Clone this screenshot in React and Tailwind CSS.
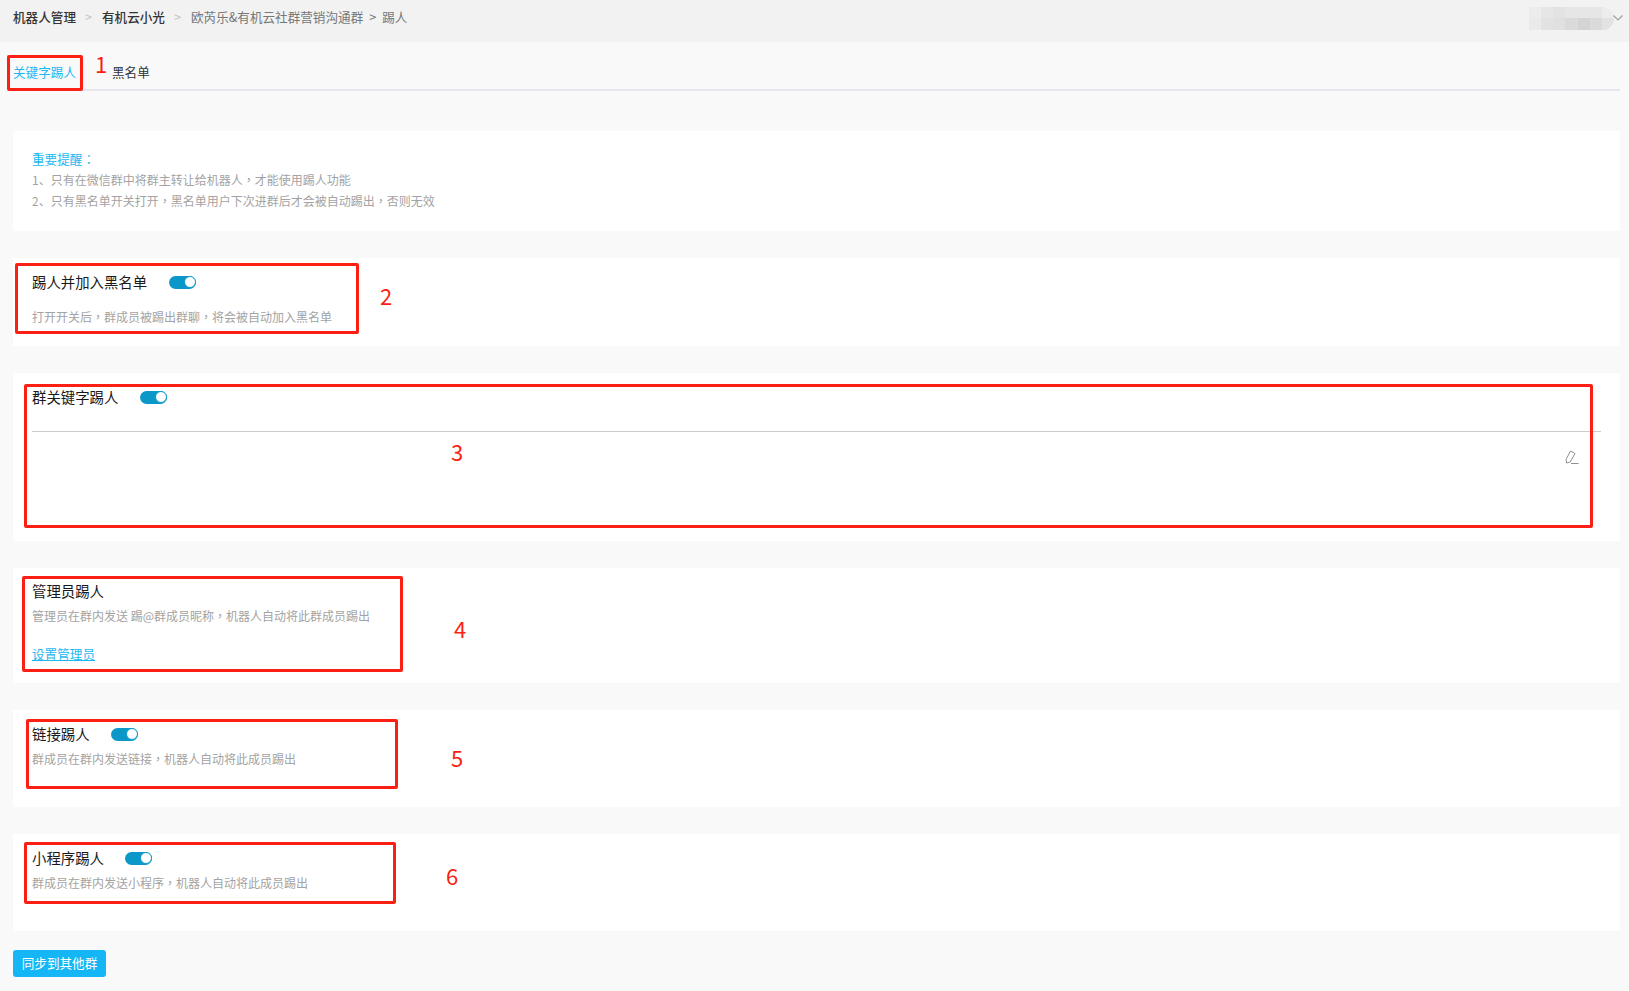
import React from "react";

const Toggle = () => (
  <div className="flex h-[13px] w-[27px] items-center justify-end rounded-full bg-[#0b98c8]">
    <div className="h-[12px] w-[12px] rounded-full border border-[#0b98c8] bg-white" />
  </div>
);

// full-width punctuation sits in the middle of its cell in the reference
const Comma = () => <span className="font-['Noto_Sans_CJK_TC']">，</span>;

const Desc = ({ children, className = "" }) => (
  <p className={`text-[12px] leading-[20px] text-[#a3a3a3] ${className}`}>{children}</p>
);

const Label = ({ children }) => (
  <span className="text-[14.4px] leading-[20px] text-[#1a1a1a]">{children}</span>
);

const Card = ({ className, children }) => (
  <section className={`bg-white px-[19px] ${className}`}>{children}</section>
);

// Red numbered boxes drawn over the screenshot
const Marks = () => (
  <>
    <div className="absolute left-[7px] top-[55px] h-[36px] w-[76px] rounded-[2px] border-[3px] border-[#fb1f14]" />
    <div className="absolute left-[15px] top-[263px] h-[71px] w-[344px] rounded-[2px] border-[3px] border-[#fb1f14]" />
    <div className="absolute left-[24px] top-[384px] h-[144px] w-[1569px] rounded-[2px] border-[3px] border-[#fb1f14]" />
    <div className="absolute left-[22px] top-[576px] h-[96px] w-[381px] rounded-[2px] border-[3px] border-[#fb1f14]" />
    <div className="absolute left-[26px] top-[719px] h-[70px] w-[372px] rounded-[2px] border-[3px] border-[#fb1f14]" />
    <div className="absolute left-[24px] top-[842px] h-[62px] w-[372px] rounded-[2px] border-[3px] border-[#fb1f14]" />
    <span className="absolute left-[95px] top-[48px] text-[22px] leading-[30px] text-[#fb1f14]">1</span>
    <span className="absolute left-[380px] top-[280px] text-[22px] leading-[30px] text-[#fb1f14]">2</span>
    <span className="absolute left-[451px] top-[436px] text-[22px] leading-[30px] text-[#fb1f14]">3</span>
    <span className="absolute left-[454px] top-[613px] text-[22px] leading-[30px] text-[#fb1f14]">4</span>
    <span className="absolute left-[451px] top-[742px] text-[22px] leading-[30px] text-[#fb1f14]">5</span>
    <span className="absolute left-[446px] top-[860px] text-[22px] leading-[30px] text-[#fb1f14]">6</span>
  </>
);

// pixelated user name, blurred out in the reference
const BlurredName = () => (
  <div className="grid h-[23px] w-[85px] grid-cols-7 grid-rows-2 overflow-hidden rounded-r-full">
    <div className="bg-[#ececec]" />
    <div className="bg-[#e6e6e6]" />
    <div className="bg-[#e2e2e2]" />
    <div className="bg-[#e6e6e6]" />
    <div className="bg-[#e6e6e6]" />
    <div className="bg-[#e6e6e6]" />
    <div className="bg-[#ececec]" />
    <div className="bg-[#eaeaea]" />
    <div className="bg-[#e2e2e2]" />
    <div className="bg-[#e0e0e0]" />
    <div className="bg-[#dadada]" />
    <div className="bg-[#d4d4d4]" />
    <div className="bg-[#dadada]" />
    <div className="bg-[#e2e2e2]" />
  </div>
);

export default function App() {
  return (
    <div
      className="relative h-[991px] overflow-hidden bg-[#f9f9f9]"
      style={{ fontFamily: '"Noto Sans CJK SC", "Noto Sans", sans-serif' }}
    >
      <header className="flex h-[42px] items-center justify-between bg-[#f2f2f2] pl-[13px] pr-[6px] text-[12.6px]">
        <nav className="flex items-center pb-[8px]">
          <span className="font-medium text-[#333]">机器人管理</span>
          <span className="ml-[9px] text-[#c4c4c4]">&gt;</span>
          <span className="ml-[10px] font-medium text-[#333]">有机云小光</span>
          <span className="ml-[9px] text-[#c4c4c4]">&gt;</span>
          <span className="ml-[10px] text-[#777]">欧芮乐&amp;有机云社群营销沟通群</span>
          <span className="ml-[6px] text-[#777]">&gt;</span>
          <span className="ml-[6px] text-[#777]">踢人</span>
        </nav>
        <div className="flex items-center pb-[6px]">
          <BlurredName />
          <svg width="10" height="6" viewBox="0 0 10 6" className="-ml-[1px]" fill="none" stroke="#a0a0a0" strokeWidth="1.2">
            <path d="M0.5 0.5 L5 5 L9.5 0.5" />
          </svg>
        </div>
      </header>

      <main className="pl-[13px] pr-[9px]">
        <div className="flex h-[49px] items-end gap-[36px] border-b-2 border-[#e6e6ee] pb-[7px] text-[12.6px] leading-[20px]">
          <span className="text-[#1bb8f2]">关键字踢人</span>
          <span className="text-[#333]">黑名单</span>
        </div>

        <Card className="mt-[40px] h-[100px] pt-[17px] text-[12px] leading-[21px] text-[#a3a3a3]">
          <p className="text-[12.6px] text-[#1bb8f2]">
            重要提醒<span className="font-['Noto_Sans_CJK_TC']">：</span>
          </p>
          <p>1、只有在微信群中将群主转让给机器人<Comma />才能使用踢人功能</p>
          <p>2、只有黑名单开关打开<Comma />黑名单用户下次进群后才会被自动踢出<Comma />否则无效</p>
        </Card>

        <Card className="mt-[27px] h-[88px] pt-[14px]">
          <div className="flex items-center gap-[22px]">
            <Label>踢人并加入黑名单</Label>
            <Toggle />
          </div>
          <Desc className="mt-[15px]">打开开关后<Comma />群成员被踢出群聊<Comma />将会被自动加入黑名单</Desc>
        </Card>

        <Card className="mt-[27px] h-[168px] pt-[14px]">
          <div className="flex items-center gap-[22px]">
            <Label>群关键字踢人</Label>
            <Toggle />
          </div>
          <div className="mt-[24px] flex justify-end border-t border-[#cccccc] pr-[22px] pt-[18px]">
            <svg width="14" height="15" viewBox="0 0 14 15" fill="none" stroke="#8f8f8f" strokeWidth="1">
              <path d="M1.5 13 L1 9.5 L5.5 1 L10 3.5 L5.2 12 Z" />
              <path d="M6 13.5 H13.5" />
            </svg>
          </div>
        </Card>

        <Card className="mt-[27px] h-[115px] pt-[10px]">
          <Label>管理员踢人</Label>
          <Desc className="mt-[4px]">管理员在群内发送 踢@群成员昵称<Comma />机器人自动将此群成员踢出</Desc>
          <a className="mt-[18px] block text-[12.6px] leading-[20px] text-[#1bb8f2] underline">设置管理员</a>
        </Card>

        <Card className="mt-[27px] h-[97px] pt-[14px]">
          <div className="flex items-center gap-[21px]">
            <Label>链接踢人</Label>
            <Toggle />
          </div>
          <Desc className="mt-[5px]">群成员在群内发送链接<Comma />机器人自动将此成员踢出</Desc>
        </Card>

        <Card className="mt-[27px] h-[97px] pt-[14px]">
          <div className="flex items-center gap-[21px]">
            <Label>小程序踢人</Label>
            <Toggle />
          </div>
          <Desc className="mt-[5px]">群成员在群内发送小程序<Comma />机器人自动将此成员踢出</Desc>
        </Card>

        <button className="mt-[19px] flex h-[27px] w-[93px] items-center justify-center rounded-[3px] bg-[#14b6f5] text-[12.6px] text-white">
          同步到其他群
        </button>
      </main>

      <Marks />
    </div>
  );
}
